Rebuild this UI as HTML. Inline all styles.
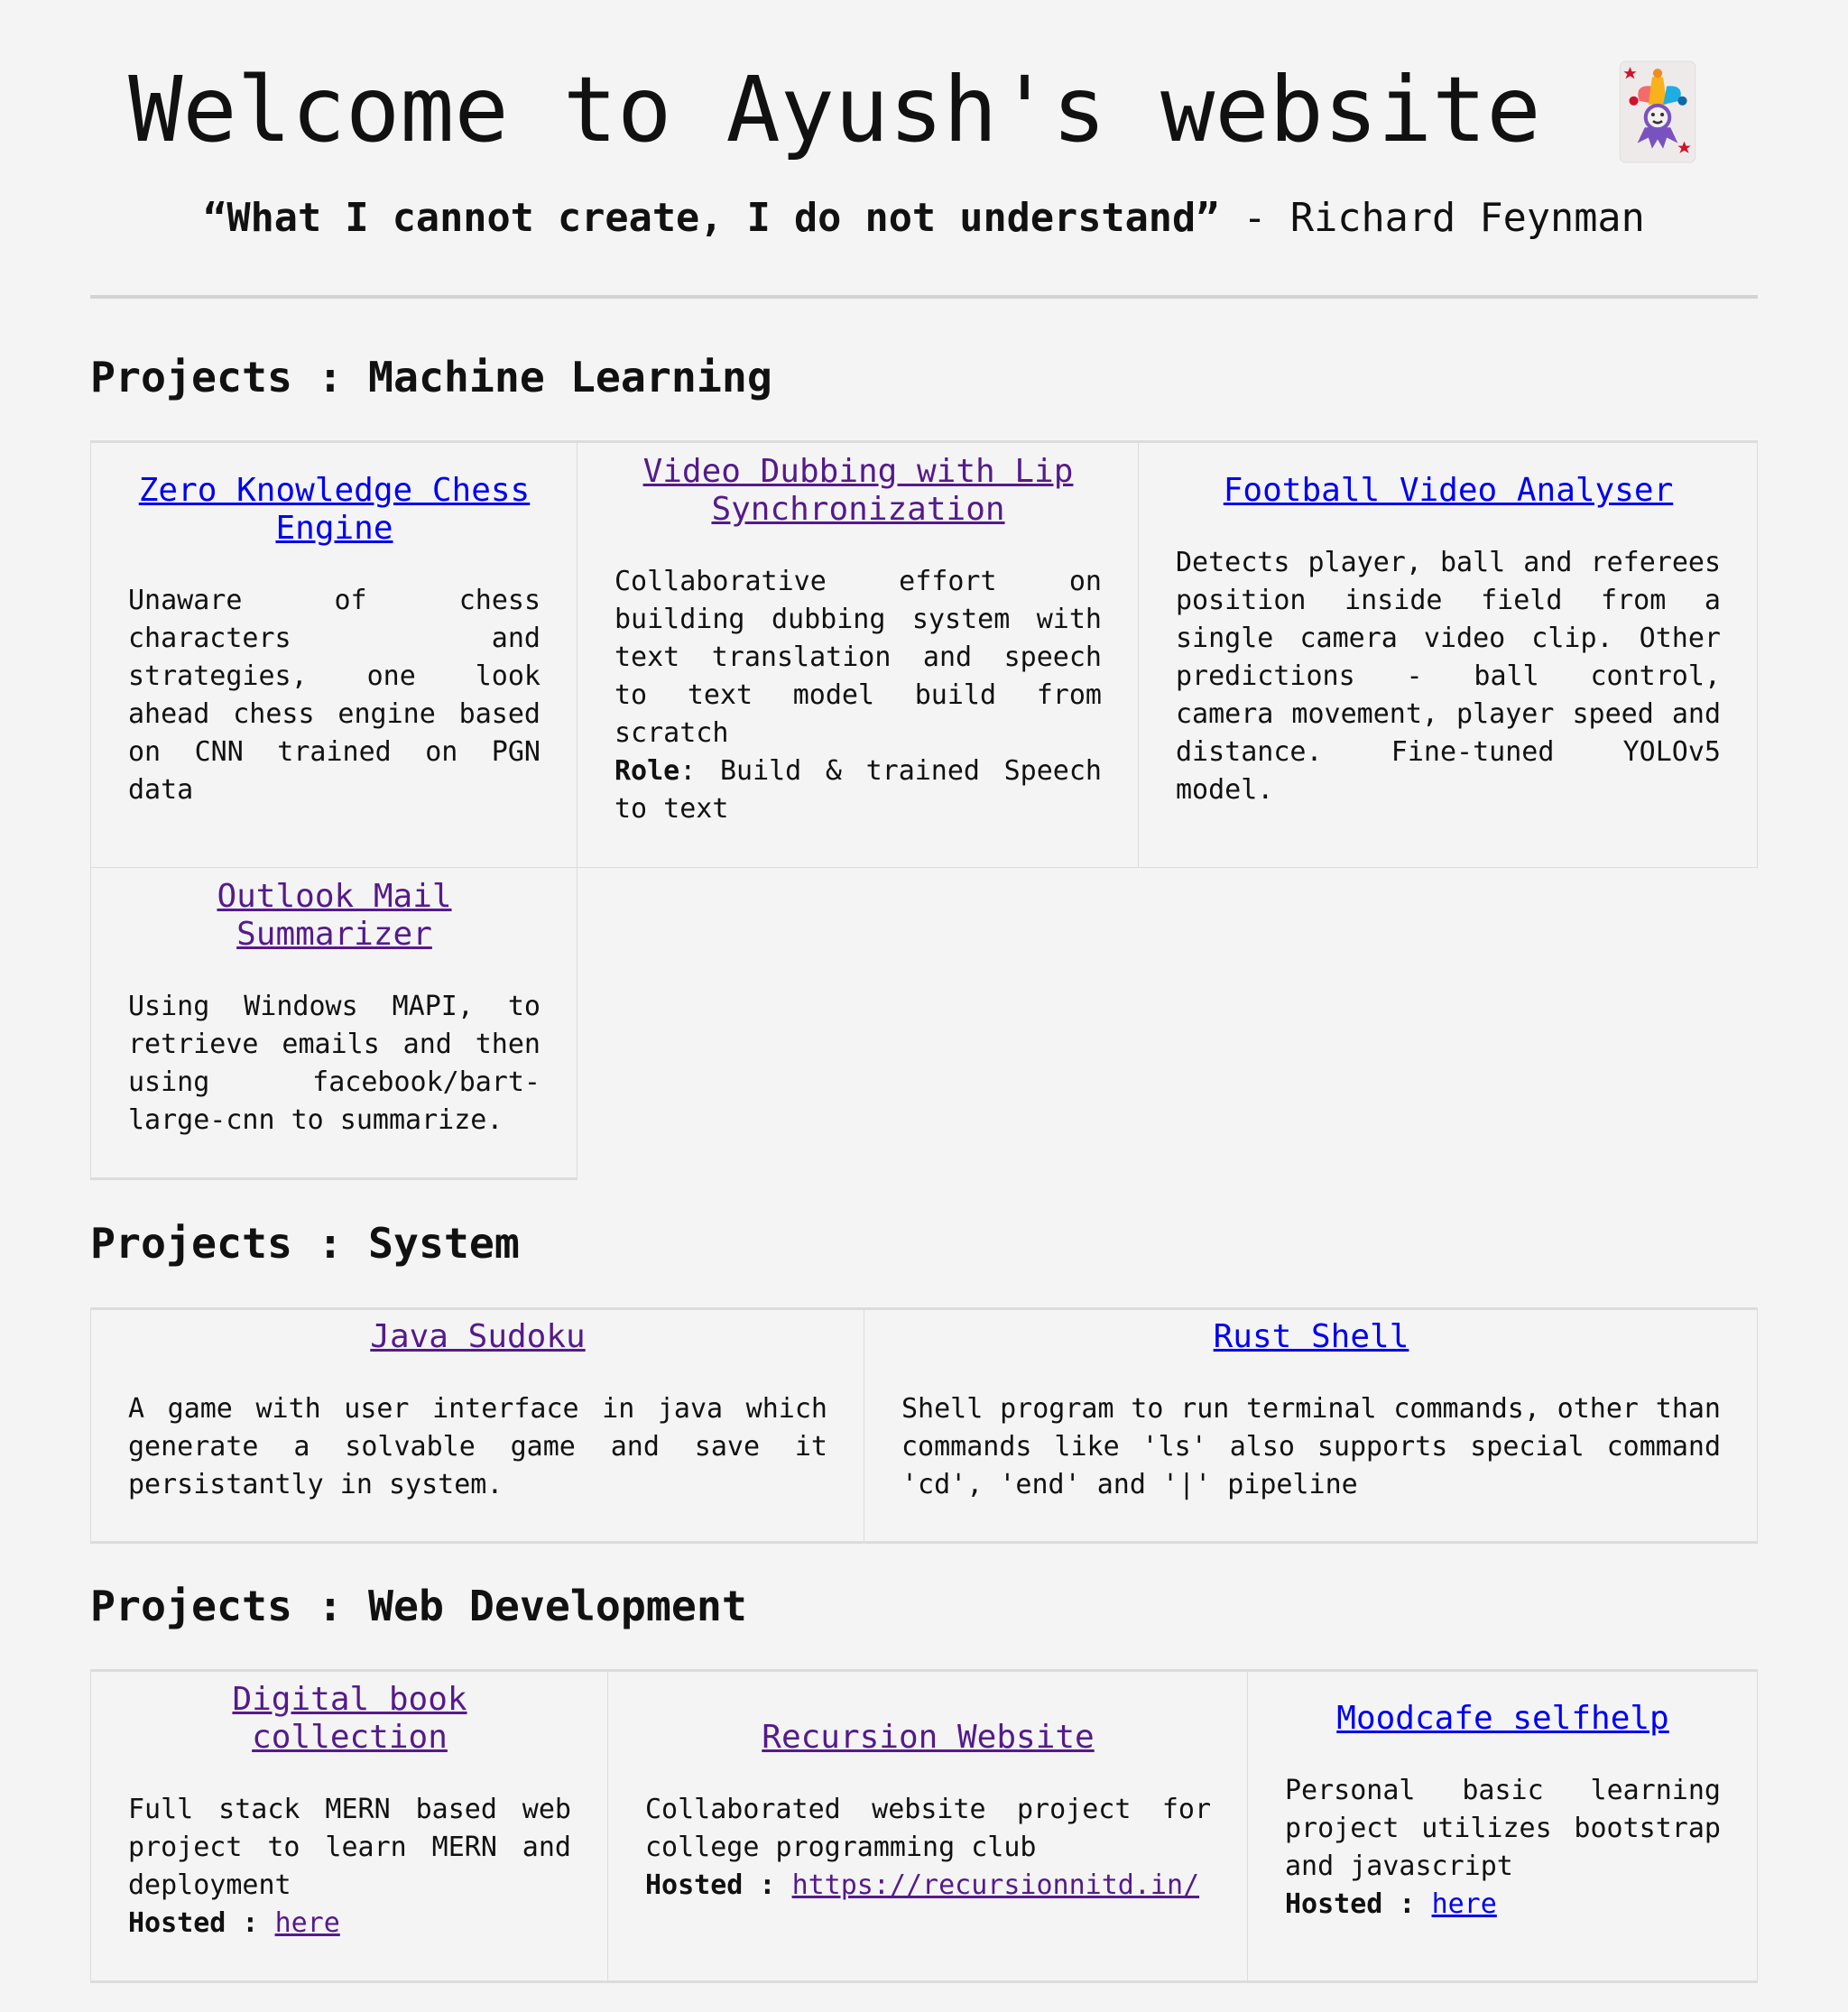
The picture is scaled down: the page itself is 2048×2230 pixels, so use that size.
<!DOCTYPE html>
<html><head><meta charset="utf-8">
<style>
html,body{margin:0;padding:0;background:#f4f4f4;}
body{width:2048px;height:2230px;position:relative;font-family:"DejaVu Sans Mono","Liberation Mono",monospace;color:#111;overflow:hidden;}
h1{position:absolute;left:-13px;width:2048px;top:52px;margin:0;text-align:center;font-size:100px;font-weight:normal;line-height:140px;white-space:nowrap;}
.card{display:inline-block;width:86px;height:114px;vertical-align:-25px;margin-left:26px;}
.quote{position:absolute;left:0;width:2048px;top:212px;text-align:center;font-size:43.5px;line-height:60px;white-space:nowrap;}
hr{position:absolute;left:100px;width:1848px;top:327px;margin:0;border:0;height:4px;background:#d3d3d3;}
h2{position:absolute;left:100px;margin:0;font-size:46.5px;font-weight:bold;line-height:60px;white-space:nowrap;}
.c{position:absolute;box-sizing:border-box;border:1px solid #dcdcdc;display:flex;flex-direction:column;justify-content:center;padding:0 40px 32px 41px;}
.c.t{border-top:3px solid #dcdcdc;}
.c.b{border-bottom:3px solid #dcdcdc;}
.c a.h{display:block;text-align:center;font-size:36px;line-height:42px;margin-bottom:38px;}
.c p{margin:0;font-size:30px;line-height:42px;text-align:justify;}
a{color:#0000ee;}
a.v{color:#551a8b;}
</style></head><body>
<h1>Welcome to Ayush's website <svg class="card" viewBox="0 0 84 112"><rect x="1" y="1" width="82" height="110" rx="6" fill="#efeaea" stroke="#e2dcdc"/><path d="M12 7l2 5 5 0-4 3 2 5-5-3-5 3 2-5-4-3 5 0z" fill="#d0112b"/><path d="M71 88l2 5 5 0-4 3 2 5-5-3-5 3 2-5-4-3 5 0z" fill="#d0112b"/><path d="M22 44 Q16 26 36 28 L42 48 Z" fill="#f46b6b"/><circle cx="16" cy="44" r="5" fill="#d0112b"/><path d="M32 48 L36 18 L48 18 L52 48 Z" fill="#f7b21c"/><circle cx="42" cy="14" r="5" fill="#f08c1c"/><path d="M48 48 L52 28 Q72 26 66 44 Z" fill="#1eaee4"/><circle cx="69" cy="44" r="5" fill="#0f6aa8"/><ellipse cx="42" cy="62" rx="13" ry="13" fill="#f4f0f0" stroke="#7a52c0" stroke-width="4"/><circle cx="37" cy="59" r="2" fill="#333"/><circle cx="47" cy="59" r="2" fill="#333"/><path d="M37 66 Q42 70 47 66" stroke="#333" stroke-width="2.5" fill="none"/><path d="M28 73 L20 90 L32 84 L36 96 L42 86 L48 96 L52 84 L64 90 L56 73 Z" fill="#7a52c0"/></svg></h1>
<div class="quote"><b>“What I cannot create, I do not understand”</b> - Richard Feynman</div>
<hr>
<h2 style="top:388px">Projects : Machine Learning</h2>
<div class="c t" style="left:100px;top:488px;width:540px;height:474px;"><a class="h" href="#">Zero Knowledge Chess Engine</a><p>Unaware of chess characters and strategies, one look ahead chess engine based on CNN trained on PGN data</p></div>
<div class="c t" style="left:639px;top:488px;width:623px;height:474px;"><a class="h v" href="#">Video Dubbing with Lip Synchronization</a><p>Collaborative effort on building dubbing system with text translation and speech to text model build from scratch<br><b>Role</b>: Build &amp; trained Speech to text</p></div>
<div class="c t" style="left:1261px;top:488px;width:687px;height:474px;"><a class="h" href="#">Football Video Analyser</a><p>Detects player, ball and referees position inside field from a single camera video clip. Other predictions - ball control, camera movement, player speed and distance. Fine-tuned YOLOv5 model.</p></div>
<div class="c b" style="left:100px;top:961px;width:540px;height:347px;"><a class="h v" href="#">Outlook Mail Summarizer</a><p>Using Windows MAPI, to retrieve emails and then using facebook/bart-large-cnn to summarize.</p></div>

<h2 style="top:1348px">Projects : System</h2>
<div class="c t b" style="left:100px;top:1449px;width:858px;height:262px;"><a class="h v" href="#">Java Sudoku</a><p>A game with user interface in java which generate a solvable game and save it persistantly in system.</p></div>
<div class="c t b" style="left:957px;top:1449px;width:991px;height:262px;"><a class="h" href="#">Rust Shell</a><p>Shell program to run terminal commands, other than commands like 'ls' also supports special command 'cd', 'end' and '|' pipeline</p></div>

<h2 style="top:1750px">Projects : Web Development</h2>
<div class="c t b" style="left:100px;top:1850px;width:574px;height:348px;"><a class="h v" href="#">Digital book collection</a><p>Full stack MERN based web project to learn MERN and deployment<br><b>Hosted :</b> <a class="v" href="#">here</a></p></div>
<div class="c t b" style="left:673px;top:1850px;width:710px;height:348px;"><a class="h v" href="#">Recursion Website</a><p>Collaborated website project for college programming club<br><b>Hosted :</b> <a class="v" href="#">https://recursionnitd.in/</a></p></div>
<div class="c t b" style="left:1382px;top:1850px;width:566px;height:348px;"><a class="h" href="#">Moodcafe selfhelp</a><p>Personal basic learning project utilizes bootstrap and javascript<br><b>Hosted :</b> <a href="#">here</a></p></div>
</body></html>
